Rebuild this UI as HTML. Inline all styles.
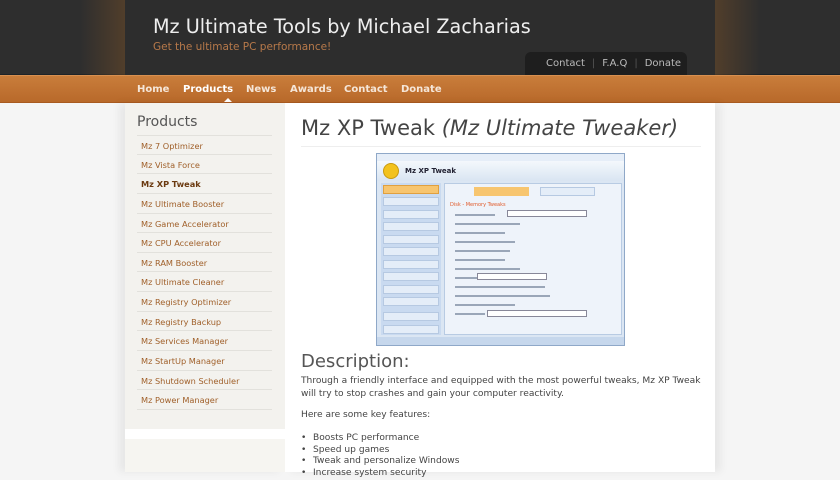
<!DOCTYPE html>
<html><head><style>
*{margin:0;padding:0;box-sizing:border-box}
body{width:840px;height:472px;overflow:hidden;background:#f5f5f5;font-family:"DejaVu Sans",sans-serif;position:relative}
#hd{position:absolute;left:0;top:0;width:840px;height:75px;background:#2e2e2e;border-bottom:1px solid #1e2327}
#hd .gl{position:absolute;left:80px;top:0;width:45px;height:75px;background:linear-gradient(90deg,rgba(120,80,40,0),rgba(110,75,40,.55))}
#hd .gr{position:absolute;left:715px;top:0;width:45px;height:75px;background:linear-gradient(270deg,rgba(120,80,40,0),rgba(110,75,40,.55))}
#hd .in{position:absolute;left:125px;top:0;width:590px;height:75px;background:#2d2d2d}
h1{position:absolute;left:153px;top:15px;font-weight:normal;font-size:19.2px;color:#eee;white-space:nowrap}
.tag{position:absolute;left:153px;top:41px;font-size:10.5px;color:#b7794a}
.tl{position:absolute;left:525px;top:52px;width:162px;height:23px;background:#1e1e1e;border-radius:6px 6px 0 0;font-size:10px;color:#bbb;padding:6px 0 0 21px}
.tl span{color:#555;margin:0 7px}
#nav{position:absolute;left:0;top:75px;width:840px;height:28px;background:linear-gradient(#c97d3b,#b8692a);border-top:1px solid #d89050;border-bottom:1px solid #a85a20}
#nav a{position:absolute;top:8px;font-size:10px;font-weight:bold;color:#f5e6d8;text-decoration:none}
#side{position:absolute;left:125px;top:103px;width:160px;height:369px;background:#f3f2ee;box-shadow:-6px 0 8px rgba(0,0,0,.06)}
#side .lo{position:absolute;left:0;top:326px;width:160px;height:43px;background:#f6f5f1;border-top:10px solid #fff}
#side h3{position:absolute;left:12px;top:11px;font-weight:normal;font-size:14px;color:#555}
#side ul{position:absolute;left:12px;top:32px;width:135px;list-style:none}
#side li{height:19.65px;border-bottom:1px solid #e2e1dc;font-size:8.2px;color:#a0602a;padding:5px 0 0 4px;white-space:nowrap}
#side li:first-child{border-top:1px solid #e2e1dc}
#side li.b{font-weight:bold;color:#6b3a10}
#main{position:absolute;left:285px;top:103px;width:430px;height:369px;background:#fff;box-shadow:6px 0 8px rgba(0,0,0,.06)}
#main h2{position:absolute;left:16px;top:13px;font-weight:normal;font-size:21px;color:#444;white-space:nowrap}
#main .hr{position:absolute;left:16px;top:43px;width:400px;height:1px;background:#eee}
.shot{position:absolute;left:91px;top:50px;width:249px;height:193px;background:#dbe6f3;border:1px solid #8fa8c8;overflow:hidden}
.btn{position:absolute;left:6px;width:56px;height:9px;background:#e4edf8;border:1px solid #b6c9e2}
.ck{position:absolute;left:78px;width:90px;height:2px;background:#9aa6b8}
#main h4{position:absolute;left:16px;top:248px;font-weight:normal;font-size:18px;color:#555}
#main p{position:absolute;left:16px;font-size:9.1px;color:#444;line-height:13px;width:410px}
#main ul{position:absolute;left:28px;top:330px;font-size:9.1px;color:#444;line-height:11.7px;list-style:none}
#main ul li:before{content:"•";position:absolute;left:-12px}
</style></head><body>
<div id="hd"><div class="gl"></div><div class="gr"></div><div class="in"></div>
<h1>Mz Ultimate Tools by Michael Zacharias</h1>
<div class="tag">Get the ultimate PC performance!</div>
<div class="tl">Contact<span>|</span>F.A.Q<span>|</span>Donate</div></div>
<div id="nav"><a style="left:137px">Home</a><a style="left:183px;color:#fff">Products</a><a style="left:246px">News</a><a style="left:290px">Awards</a><a style="left:344px">Contact</a><a style="left:401px">Donate</a>
<div style="position:absolute;left:224px;top:22px;border:4px solid transparent;border-bottom-color:#fff;border-top:0"></div></div>
<div id="side"><div class="lo"></div><h3>Products</h3><ul>
<li>Mz 7 Optimizer</li><li>Mz Vista Force</li><li class="b">Mz XP Tweak</li><li>Mz Ultimate Booster</li><li>Mz Game Accelerator</li><li>Mz CPU Accelerator</li><li>Mz RAM Booster</li><li>Mz Ultimate Cleaner</li><li>Mz Registry Optimizer</li><li>Mz Registry Backup</li><li>Mz Services Manager</li><li>Mz StartUp Manager</li><li>Mz Shutdown Scheduler</li><li>Mz Power Manager</li></ul></div>
<div id="main">
<h2>Mz XP Tweak <i>(Mz Ultimate Tweaker)</i></h2><div class="hr"></div>
<div class="shot">
<div style="position:absolute;left:0;top:0;width:247px;height:7px;background:#e6eef8"></div>
<div style="position:absolute;left:0;top:7px;width:247px;height:20px;background:linear-gradient(#f4f8fc,#d9e5f2)"></div>
<div style="position:absolute;left:6px;top:9px;width:16px;height:16px;border-radius:50%;background:#f3c21c;border:1px solid #c99a10"></div>
<div style="position:absolute;left:28px;top:13px;font-size:7px;font-weight:bold;color:#223">Mz XP Tweak</div>
<div style="position:absolute;left:4px;top:29px;width:60px;height:152px;background:#c9daf0"></div>
<div class="btn" style="top:31px;background:#f7c56f;border-color:#e0a040"></div>
<div class="btn" style="top:43px"></div><div class="btn" style="top:56px"></div><div class="btn" style="top:68px"></div><div class="btn" style="top:81px"></div><div class="btn" style="top:93px"></div><div class="btn" style="top:106px"></div><div class="btn" style="top:118px"></div><div class="btn" style="top:131px"></div><div class="btn" style="top:143px"></div><div class="btn" style="top:158px"></div><div class="btn" style="top:171px"></div>
<div style="position:absolute;left:67px;top:29px;width:178px;height:152px;background:#eef3fa;border:1px solid #b8cbe3"></div>
<div style="position:absolute;left:97px;top:33px;width:55px;height:9px;background:#f7c56f"></div>
<div style="position:absolute;left:163px;top:33px;width:55px;height:9px;background:#e4edf8;border:1px solid #b6c9e2"></div>
<div style="position:absolute;left:73px;top:48px;font-size:5px;color:#e05a2a">Disk - Memory Tweaks</div>
<div class="ck" style="top:60px;width:40px"></div><div class="ck" style="top:69px;width:65px"></div><div class="ck" style="top:78px;width:50px"></div><div class="ck" style="top:87px;width:60px"></div><div class="ck" style="top:96px;width:55px"></div><div class="ck" style="top:105px;width:50px"></div><div class="ck" style="top:114px;width:65px"></div><div class="ck" style="top:123px;width:40px"></div><div class="ck" style="top:132px;width:90px"></div><div class="ck" style="top:141px;width:95px"></div><div class="ck" style="top:150px;width:60px"></div><div class="ck" style="top:159px;width:30px"></div>
<div style="position:absolute;left:130px;top:56px;width:80px;height:7px;background:#fff;border:1px solid #889"></div>
<div style="position:absolute;left:100px;top:119px;width:70px;height:7px;background:#fff;border:1px solid #889"></div>
<div style="position:absolute;left:110px;top:156px;width:100px;height:7px;background:#fff;border:1px solid #889"></div>
<div style="position:absolute;left:0;top:183px;width:247px;height:8px;background:#c6d7ec"></div>
</div>
<h4>Description:</h4>
<p style="top:272px">Through a friendly interface and equipped with the most powerful tweaks, Mz XP Tweak will try to stop crashes and gain your computer reactivity.</p>
<p style="top:306px">Here are some key features:</p>
<ul><li>Boosts PC performance</li><li>Speed up games</li><li>Tweak and personalize Windows</li><li>Increase system security</li></ul>
</div>
</body></html>
